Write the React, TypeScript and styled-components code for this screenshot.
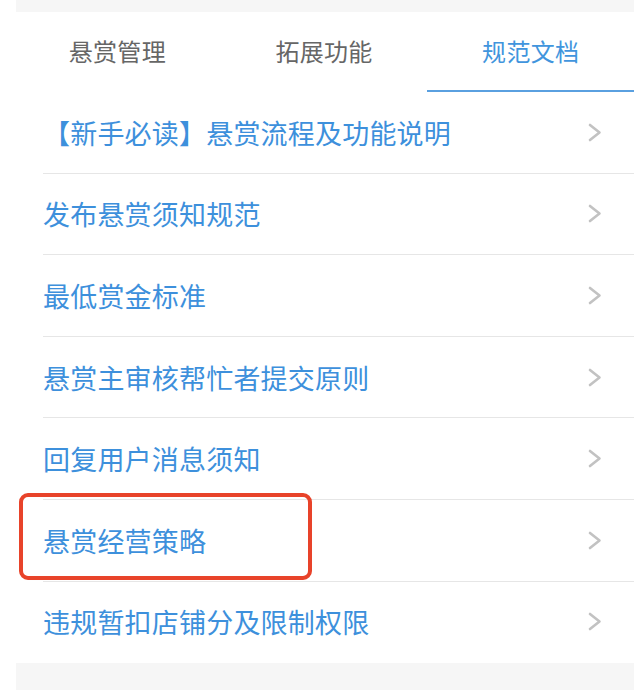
import React from "react";
import styled, { createGlobalStyle } from "styled-components";

const Global = createGlobalStyle`
  html, body { margin: 0; padding: 0; background: #ffffff; }
  body { font-family: "Noto Sans CJK SC", "Noto Sans", sans-serif; }
`;

const Page = styled.div`
  width: 634px;
  height: 690px;
  background: #ffffff;
  display: flex;
  flex-direction: column;
  overflow: hidden;
`;

const GrayBand = styled.div<{ $h: number }>`
  margin-left: 16px;
  height: ${(p) => p.$h}px;
  background: #f6f6f6;
  flex-shrink: 0;
`;

const TabBar = styled.div`
  display: flex;
  height: 80px;
  padding-left: 14px;
  flex-shrink: 0;
`;

const Tab = styled.div<{ $active?: boolean }>`
  flex: 1;
  display: flex;
  align-items: center;
  justify-content: center;
  font-size: 24px;
  letter-spacing: 0.3px;
  color: ${(p) => (p.$active ? "#4195dd" : "#666666")};
  border-bottom: 2px solid ${(p) => (p.$active ? "#5aa0e0" : "transparent")};
  box-sizing: border-box;
  padding-bottom: 2px;
`;

const List = styled.div`
  display: flex;
  flex-direction: column;
  flex: 1;
`;

const Row = styled.div<{ $last?: boolean }>`
  position: relative;
  margin-left: 43px;
  height: 81.6px;
  box-sizing: border-box;
  display: flex;
  align-items: center;
  justify-content: space-between;
  padding-right: 32px;
  border-bottom: 1px solid ${(p) => (p.$last ? "transparent" : "#e6e6e6")};
`;

const RowText = styled.span`
  font-size: 27px;
  color: #3d90dc;
  letter-spacing: 0.2px;
  margin-left: 0px;
`;

const Highlight = styled.div`
  position: absolute;
  left: -24px;
  top: -7px;
  width: 293px;
  height: 87px;
  box-sizing: border-box;
  border: 4px solid #e8432a;
  border-radius: 9px;
  pointer-events: none;
`;

const Chevron = () => (
  <svg width="15" height="19" viewBox="0 0 15 19" fill="none">
    <polyline
      points="3,2 12.5,9.5 3,17"
      stroke="#c2c2c2"
      strokeWidth="2.6"
      strokeLinecap="round"
      strokeLinejoin="round"
    />
  </svg>
);

const tabs = ["悬赏管理", "拓展功能", "规范文档"];
const items = [
  "【新手必读】悬赏流程及功能说明",
  "发布悬赏须知规范",
  "最低赏金标准",
  "悬赏主审核帮忙者提交原则",
  "回复用户消息须知",
  "悬赏经营策略",
  "违规暂扣店铺分及限制权限",
];

export default function App() {
  return (
    <Page>
      <Global />
      <GrayBand $h={12} />
      <TabBar>
        {tabs.map((t, i) => (
          <Tab key={t} $active={i === 2}>
            {t}
          </Tab>
        ))}
      </TabBar>
      <List>
        {items.map((t, i) => (
          <Row key={t} $last={i === items.length - 1}>
            <RowText>{t}</RowText>
            <Chevron />
            {i === 5 && <Highlight />}
          </Row>
        ))}
      </List>
      <GrayBand $h={27} />
    </Page>
  );
}
